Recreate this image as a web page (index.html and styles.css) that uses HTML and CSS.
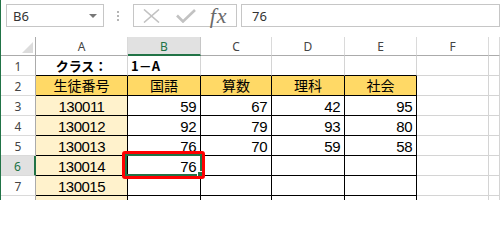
FILE: index.html
```html
<!DOCTYPE html>
<html lang="ja">
<head>
<meta charset="utf-8">
<link rel="stylesheet" href="styles.css">
</head>
<body>
<div class="app">
  <div class="fbar">
    <div class="namebox"><span class="nb-text">B6</span><span class="nb-arrow"></span></div>
    <div class="grip"><i></i><i></i><i></i></div>
    <div class="fxbox">
      <svg class="ico-x" width="17" height="14" viewBox="0 0 17 14"><path d="M1 0.5 L16 13.5 M16 0.5 L1 13.5"/></svg>
      <svg class="ico-ok" width="20" height="14" viewBox="0 0 20 14"><path d="M1 6.5 L7 12.5 L19 1"/></svg>
      <span class="fx">fx</span>
    </div>
    <div class="finput">76</div>
  </div>
  <div class="sheet">
    <div class="grid">
      <div class="c corner"><span class="tri"></span></div>
      <div class="c ch">A</div>
      <div class="c ch on">B</div>
      <div class="c ch">C</div>
      <div class="c ch">D</div>
      <div class="c ch">E</div>
      <div class="c ch">F</div>
      <div class="c ch"></div>

      <div class="c rh">1</div>
      <div class="c tb jp b ctr kana">クラス：</div>
      <div class="c tb jp b kana left">1－A</div>
      <div class="c tb"></div>
      <div class="c tb"></div>
      <div class="c tb"></div>
      <div class="c"></div>
      <div class="c"></div>

      <div class="c rh">2</div>
      <div class="c t gold jp ctr">生徒番号</div>
      <div class="c t gold jp ctr">国語</div>
      <div class="c t gold jp ctr">算数</div>
      <div class="c t gold jp ctr">理科</div>
      <div class="c t gold jp ctr">社会</div>
      <div class="c"></div>
      <div class="c"></div>

      <div class="c rh">3</div>
      <div class="c t tan ctr">130011</div>
      <div class="c t num">59</div>
      <div class="c t num">67</div>
      <div class="c t num">42</div>
      <div class="c t num">95</div>
      <div class="c"></div>
      <div class="c"></div>

      <div class="c rh">4</div>
      <div class="c t tan ctr">130012</div>
      <div class="c t num">92</div>
      <div class="c t num">79</div>
      <div class="c t num">93</div>
      <div class="c t num">80</div>
      <div class="c"></div>
      <div class="c"></div>

      <div class="c rh">5</div>
      <div class="c t tan ctr">130013</div>
      <div class="c t num">76</div>
      <div class="c t num">70</div>
      <div class="c t num">59</div>
      <div class="c t num">58</div>
      <div class="c"></div>
      <div class="c"></div>

      <div class="c rh on">6</div>
      <div class="c t tan ctr">130014</div>
      <div class="c t num">76</div>
      <div class="c t"></div>
      <div class="c t"></div>
      <div class="c t"></div>
      <div class="c"></div>
      <div class="c"></div>

      <div class="c rh">7</div>
      <div class="c t tan ctr">130015</div>
      <div class="c t"></div>
      <div class="c t"></div>
      <div class="c t"></div>
      <div class="c t"></div>
      <div class="c"></div>
      <div class="c"></div>

      <div class="c rh">8</div>
      <div class="c t tan"></div>
      <div class="c t"></div>
      <div class="c t"></div>
      <div class="c t"></div>
      <div class="c t"></div>
      <div class="c"></div>
      <div class="c"></div>
    </div>
    <div class="sel"><span class="handle"></span></div>
    <div class="mark"></div>
  </div>
</div>
</body>
</html>
```
FILE: styles.css
```css
html, body {
  margin: 0;
  padding: 0;
  background: #fff;
}
body {
  width: 500px;
  height: 200px;
  overflow: hidden;
}
.app {
  border-left: 1px solid #217346;
  height: 200px;
  box-sizing: border-box;
  font-family: "Noto Sans", "Liberation Sans", sans-serif;
}
.fbar {
  height: 37px;
  box-sizing: border-box;
  padding-top: 4px;
  display: flex;
  align-items: flex-start;
  white-space: nowrap;
}
.namebox {
  margin-left: 5px;
  width: 102px;
  height: 23px;
  box-sizing: border-box;
  border: 1px solid #c6c6c6;
  display: flex;
  align-items: center;
  padding-left: 6px;
  font-size: 13px;
  color: #333;
}
.nb-arrow {
  margin-left: auto;
  margin-right: 6px;
  width: 0;
  height: 0;
  border-left: 4px solid transparent;
  border-right: 4px solid transparent;
  border-top: 4px solid #777;
}
.grip {
  width: 30px;
  height: 23px;
  display: flex;
  flex-direction: column;
  align-items: center;
  justify-content: center;
  gap: 2px;
}
.grip i {
  display: block;
  width: 2px;
  height: 2px;
  background: #b5b5b5;
}
.fxbox {
  width: 109px;
  height: 23px;
  box-sizing: border-box;
  border: 1px solid #c6c6c6;
  display: flex;
  align-items: center;
}
.ico-x {
  margin-left: 9px;
  fill: none;
  stroke: #c2c2c2;
  stroke-width: 1.6;
}
.ico-ok {
  margin-left: 16px;
  fill: none;
  stroke: #c2c2c2;
  stroke-width: 2.6;
}
.fx {
  margin-left: 14px;
  font-family: "Liberation Serif", serif;
  font-style: italic;
  font-size: 22px;
  line-height: 21px;
  color: #6a6a6a;
  letter-spacing: 1px;
}
.finput {
  margin-left: 4px;
  width: 270px;
  height: 23px;
  box-sizing: border-box;
  border: 1px solid #c6c6c6;
  padding-left: 10px;
  display: flex;
  align-items: center;
  font-size: 13px;
  color: #333;
}
.sheet {
  position: relative;
}
.grid {
  display: grid;
  grid-template-columns: 35px 92px 73px 71px 73px 72px 72px 1fr;
  grid-template-rows: 19px repeat(8, 20px);
}
.c {
  box-sizing: border-box;
  border-right: 1px solid #d4d4d4;
  border-bottom: 1px solid #d4d4d4;
  display: flex;
  align-items: flex-end;
  padding: 0 4px 1px 4px;
  overflow: hidden;
  white-space: nowrap;
  font-family: "Liberation Sans", Arial, sans-serif;
  font-size: 15px;
  line-height: 15px;
  letter-spacing: -0.5px;
  color: #000;
}
.corner {
  border-right-color: #ababab;
  border-bottom-color: #ababab;
  justify-content: flex-end;
  padding: 0 2px 2px 0;
}
.tri {
  width: 0;
  height: 0;
  border-left: 11px solid transparent;
  border-bottom: 11px solid #dcdcdc;
}
.ch {
  border-right-color: #dadada;
  border-bottom-color: #ababab;
  justify-content: center;
  align-items: center;
  padding: 0;
  font-family: "Noto Sans", sans-serif;
  font-size: 12px;
  letter-spacing: 0;
  color: #444;
}
.ch.on {
  background: #e1e1e1;
  border-right-color: #c6c6c6;
  border-bottom: 2px solid #217346;
  color: #217346;
  padding-top: 1px;
}
.rh {
  border-right-color: #ababab;
  border-bottom-color: #dadada;
  justify-content: center;
  padding: 0 0 2px 0;
  font-family: "Noto Sans", sans-serif;
  font-size: 12px;
  line-height: 12px;
  letter-spacing: 0;
  color: #444;
}
.rh.on {
  background: #e1e1e1;
  border-right: 2px solid #217346;
  color: #217346;
}
.t {
  border-right-color: #000;
  border-bottom-color: #000;
}
.tb {
  border-bottom-color: #000;
}
.gold {
  background: #ffd966;
}
.tan {
  background: #fff2cc;
}
.jp {
  font-family: "Noto Sans CJK JP", sans-serif;
  font-size: 14px;
  letter-spacing: 0;
  padding-bottom: 2px;
}
.kana {
  font-size: 13px;
}
.b {
  font-weight: 700;
}
.ctr {
  justify-content: center;
}
.left {
  padding-left: 3px;
}
.num {
  justify-content: flex-end;
}
.sel {
  position: absolute;
  left: 124px;
  top: 117px;
  width: 77px;
  height: 22px;
  box-sizing: border-box;
  border: 2px solid #217346;
}
.handle {
  position: absolute;
  right: -3px;
  bottom: -3px;
  width: 5px;
  height: 5px;
  background: #217346;
  border-top: 1px solid #fff;
  border-left: 1px solid #fff;
}
.mark {
  position: absolute;
  left: 121px;
  top: 114px;
  width: 83px;
  height: 28px;
  box-sizing: border-box;
  border: 3px solid #ff0000;
  border-radius: 3px;
}
```
